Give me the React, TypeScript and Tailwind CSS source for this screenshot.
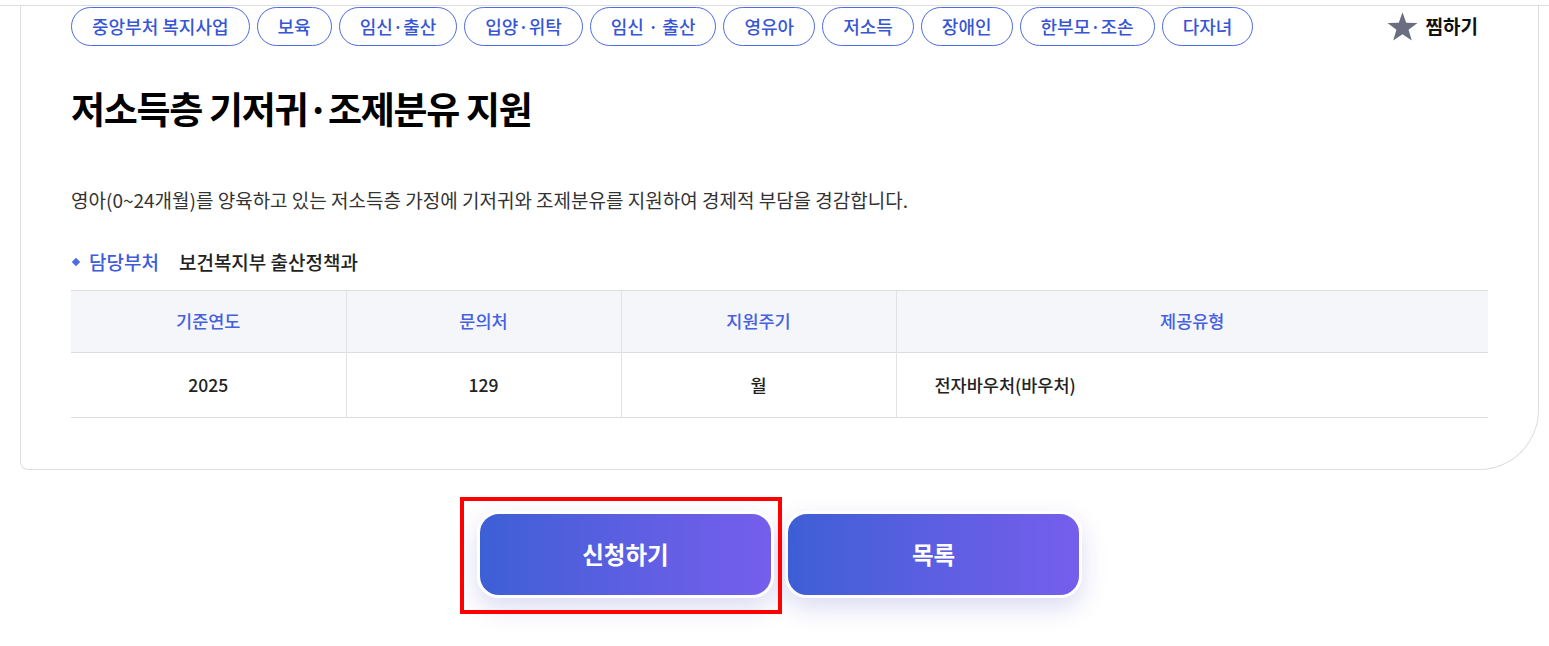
import { type ReactNode } from 'react'

const tags = [
  '중앙부처 복지사업',
  '보육',
  '임신·출산',
  '입양·위탁',
  '임신 · 출산',
  '영유아',
  '저소득',
  '장애인',
  '한부모·조손',
  '다자녀',
]

const font = { fontFamily: '"Noto Sans CJK KR", "Noto Sans", sans-serif' }

function Tag({ children }: { children: ReactNode }) {
  return (
    <span className="flex h-[39px] items-center rounded-full border border-[#4d6be3] px-[20px] text-[18px] font-medium text-[#3756d6]">
      {children}
    </span>
  )
}

function Star() {
  return (
    <svg width="31" height="30" viewBox="0 0 24 23">
      <polygon
        points="12,0 14.9,8.2 23.6,8.4 16.7,13.7 19.2,22 12,17.1 4.8,22 7.3,13.7 0.4,8.4 9.1,8.2"
        fill="#6b6e80"
      />
    </svg>
  )
}

export default function App() {
  return (
    <div className="min-h-[646px] bg-white text-[#222]" style={font}>
      <div className="h-[6px] border-b border-[#dddddd]" />
      <div className="pl-[20px] pr-[10px]">
        <div className="rounded-bl-[8px] rounded-br-[60px] border-x border-b border-[#dddddd] px-[50px] pb-[51px] pt-[1px]">
          <div className="flex items-center justify-between">
            <div className="flex gap-[7px]">
              {tags.map((t) => (
                <Tag key={t}>{t}</Tag>
              ))}
            </div>
            <div className="mr-[10px] flex items-center gap-[8px] text-[19px] font-bold text-[#111]">
              <Star />
              찜하기
            </div>
          </div>

          <h1 className="mt-[38px] text-[37px] font-bold leading-[48px] tracking-[-0.035em] text-black">
            저소득층 기저귀·조제분유 지원
          </h1>

          <p className="mt-[56px] text-[19px] leading-[24px] text-[#333]">
            영아(0~24개월)를 양육하고 있는 저소득층 가정에 기저귀와 조제분유를 지원하여 경제적 부담을 경감합니다.
          </p>

          <div className="mt-[37px] flex items-center text-[19px] font-medium leading-[26px]">
            <span className="ml-[2px] mr-[10px] inline-block h-[6px] w-[6px] rotate-45 bg-[#4d6be3]" />
            <span className="text-[#3d5bdb]">담당부처</span>
            <span className="ml-[20px] text-[#222]">보건복지부 출산정책과</span>
          </div>

          <table className="mt-[15px] w-full border-collapse text-center">
            <thead>
              <tr className="h-[62px] border-y border-[#dddddd] bg-[#f5f6fa] text-[17.5px] font-medium text-[#4560e0]">
                <th className="w-[275px] border-r border-[#e2e2e2] font-medium">기준연도</th>
                <th className="w-[275px] border-r border-[#e2e2e2] font-medium">문의처</th>
                <th className="w-[275px] border-r border-[#e2e2e2] font-medium">지원주기</th>
                <th className="font-medium">제공유형</th>
              </tr>
            </thead>
            <tbody>
              <tr className="h-[65px] border-b border-[#dddddd] text-[17.5px] font-medium text-[#222]">
                <td className="border-r border-[#e2e2e2]">2025</td>
                <td className="border-r border-[#e2e2e2]">129</td>
                <td className="border-r border-[#e2e2e2]">월</td>
                <td className="pl-[38px] text-left">전자바우처(바우처)</td>
              </tr>
            </tbody>
          </table>
        </div>

        <div className="mt-[41px] flex justify-center gap-[11px]">
          <div className="relative">
            <button className="flex h-[87px] w-[297px] items-center justify-center rounded-[22px] border-[3px] border-white bg-gradient-to-r from-[#3d5fd6] to-[#755eec] text-[23.5px] font-bold text-white shadow-[0_10px_24px_rgba(90,90,200,0.22)]">
              신청하기
            </button>
            <div className="absolute -bottom-[16px] -left-[17px] -right-[8px] -top-[14px] border-4 border-[#ff0000]" />
          </div>
          <button className="flex h-[87px] w-[297px] items-center justify-center rounded-[22px] border-[3px] border-white bg-gradient-to-r from-[#3d5fd6] to-[#755eec] text-[23.5px] font-bold text-white shadow-[0_10px_24px_rgba(90,90,200,0.22)]">
            목록
          </button>
        </div>
      </div>
    </div>
  )
}
